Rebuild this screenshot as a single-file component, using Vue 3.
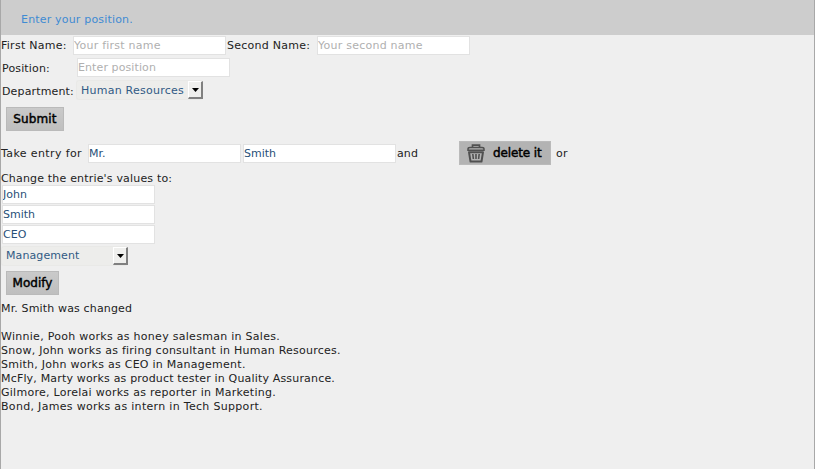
<script setup>
import { ref } from 'vue'

const firstName = ref('')
const secondName = ref('')
const position = ref('')
const title = ref('Mr.')
const surname = ref('Smith')
const newFirst = ref('John')
const newSecond = ref('Smith')
const newPosition = ref('CEO')

const entries = [
  { text: 'Winnie, Pooh works as honey salesman in Sales.', tracking: 0.28 },
  { text: 'Snow, John works as firing consultant in Human Resources.', tracking: 0.25 },
  { text: 'Smith, John works as CEO in Management.', tracking: 0.26 },
  { text: 'McFly, Marty works as product tester in Quality Assurance.', tracking: 0.175 },
  { text: 'Gilmore, Lorelai works as reporter in Marketing.', tracking: 0.265 },
  { text: 'Bond, James works as intern in Tech Support.', tracking: 0.31 },
]
</script>

<template>
  <main class="shell">
    <header class="message">Enter your position.</header>

    <form class="create" @submit.prevent>
      <div class="row name-row">
        <label class="label first">First Name:</label>
        <input v-model="firstName" class="field spaced" placeholder="Your first name" />
        <label class="label second">Second Name:</label>
        <input v-model="secondName" class="field spaced" placeholder="Your second name" />
      </div>
      <div class="row position-row">
        <label class="label side">Position:</label>
        <input v-model="position" class="field snug" placeholder="Enter position" />
      </div>
      <div class="row department-row">
        <label class="label side">Department:</label>
        <div class="combo">
          <span class="combo-text">Human Resources</span>
          <span class="combo-button"><svg width="7" height="4" viewBox="0 0 7 4"><path d="M0 0H7L3.5 4Z" /></svg></span>
        </div>
      </div>
      <button class="button submit">Submit</button>
    </form>

    <section class="row take">
      <span class="take-label">Take entry for</span>
      <input v-model="title" class="field" />
      <input v-model="surname" class="field surname" />
      <span class="and">and</span>
      <button class="button delete">
        <svg class="trash" width="18" height="19" viewBox="0 0 18 19" fill="none" stroke="#505050">
          <path d="M5.5 3V1.2H12.5V3" stroke-width="1.7" />
          <path d="M1 6.3V5Q1 3.5 3 3.5H15Q17 3.5 17 5V6.3Z" stroke-width="1.5" />
          <path d="M2 8.2H16L14.5 17.5H3.5Z" stroke-width="2" stroke-linejoin="round" />
          <path d="M5.8 10L6.4 15M9 10V15M12.2 10L11.6 15" stroke-width="1.6" />
        </svg>
        <span>delete it</span>
      </button>
      <span class="or">or</span>
    </section>

    <section class="change">
      <div class="change-label">Change the entrie's values to:</div>
      <div class="stack">
        <input v-model="newFirst" class="field" />
        <input v-model="newSecond" class="field" />
        <input v-model="newPosition" class="field" />
      </div>
      <div class="combo wide">
        <span class="combo-text">Management</span>
        <span class="combo-button"><svg width="7" height="4" viewBox="0 0 7 4"><path d="M0 0H7L3.5 4Z" /></svg></span>
      </div>
      <button class="button modify">Modify</button>
    </section>

    <p class="status">Mr. Smith was changed</p>
    <ul class="entries">
      <li v-for="entry in entries" :key="entry.text" :style="{ letterSpacing: entry.tracking + 'px' }">{{ entry.text }}</li>
    </ul>
  </main>
</template>

<style>
body {
  margin: 0;
  overflow: hidden;
}
</style>

<style scoped>
* {
  box-sizing: border-box;
}
.shell {
  width: 815px;
  height: 469px;
  background: #efefef;
  border-left: 1px solid #a8a8a8;
  border-right: 1px solid #a8a8a8;
  font: 11px/14px "DejaVu Sans", Verdana, sans-serif;
  color: #222;
  white-space: nowrap;
}
.message {
  height: 35px;
  padding: 13px 0 0 20px;
  background: #cdcdcd;
  color: #3f8bd3;
  letter-spacing: 0.18px;
}
.row {
  display: flex;
  align-items: center;
}
.name-row {
  height: 19px;
  margin-top: 1px;
}
.position-row {
  height: 19px;
  margin-top: 3px;
}
.department-row {
  height: 20px;
  margin-top: 3px;
}
.label {
  flex: none;
  letter-spacing: 0.26px;
}
.first {
  width: 72px;
}
.second {
  width: 91px;
  padding-left: 1px;
}
.side {
  width: 76px;
  padding: 2px 0 0 1px;
  letter-spacing: 0.15px;
}
.department-row .side {
  width: 75px;
  padding-top: 3px;
}
.field {
  display: block;
  flex: none;
  width: 153px;
  height: 19px;
  margin: 0;
  padding: 0 0 1px;
  border: 1px solid #e2e2e2;
  border-radius: 0;
  outline: none;
  background: #fff;
  color: #285078;
  font: inherit;
}
.spaced {
  letter-spacing: 0.24px;
}
.snug {
  letter-spacing: 0.1px;
}
.field::placeholder {
  color: #b0b0b0;
  opacity: 1;
}
.combo {
  display: flex;
  justify-content: space-between;
  width: 127px;
  height: 20px;
  padding-left: 4px;
  border: 1px solid #e9e9e7;
  border-right: 0;
  border-radius: 3px;
  background: #ededeb;
  color: #315a84;
  letter-spacing: 0.24px;
}
.combo-text {
  padding-top: 3px;
}
.combo-button {
  display: flex;
  align-items: center;
  justify-content: center;
  width: 15px;
  height: 18px;
  border: solid;
  border-width: 1px 2px 2px 1px;
  border-color: #fff #808080 #808080 #fff;
  background: #efefed;
}
.button {
  display: flex;
  align-items: center;
  justify-content: center;
  height: 24px;
  margin: 0;
  padding: 0;
  border: 1px solid #bababa;
  background: linear-gradient(#cacaca, #bfbfbf);
  color: #000;
  font: 12px/14px "DejaVu Sans", Verdana, sans-serif;
  -webkit-text-stroke: 0.45px #000;
}
.submit {
  width: 58px;
  margin: 7px 0 0 5px;
  letter-spacing: 0.12px;
}
.take {
  height: 24px;
  margin-top: 10px;
}
.take .field {
  padding: 1px 0 0;
}
.take-label {
  width: 87px;
  padding-top: 1px;
  letter-spacing: 0.38px;
}
.surname {
  margin-left: 2px;
}
.and {
  width: 63px;
  padding: 1px 0 0 1px;
  letter-spacing: 0.1px;
}
.delete {
  width: 92px;
  justify-content: flex-start;
  gap: 8px;
  padding-left: 7px;
  background: #b3b3b3;
  letter-spacing: -0.12px;
}
.or {
  padding: 1px 0 0 5px;
  letter-spacing: 0.2px;
}
.change-label {
  height: 13px;
  margin-top: 7px;
  letter-spacing: 0.18px;
}
.stack {
  display: grid;
  gap: 1px;
  padding-left: 1px;
}
.wide {
  margin-top: 2px;
  letter-spacing: 0.1px;
}
.wide .combo-text {
  padding-top: 2px;
}
.modify {
  width: 53px;
  margin: 5px 0 0 5px;
}
.status {
  margin: 7px 0 14px;
  letter-spacing: 0.15px;
}
.entries {
  margin: 0;
  padding: 0;
  list-style: none;
}
</style>
